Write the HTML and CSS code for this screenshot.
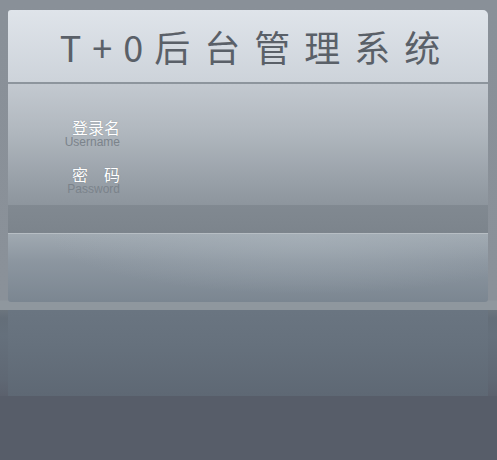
FILE: index.html
```html
<!DOCTYPE html>
<html lang="zh">
<head>
<meta charset="utf-8">
<title>T+0后台管理系统</title>
<link rel="stylesheet" href="styles.css">
</head>
<body>
<div class="stage">
  <div class="frame">
    <div class="panel">
      <div class="header"><h1 class="title"><span class="latin">T+0</span>后台管理系统</h1></div>
      <div class="body">
        <div class="form">
          <div class="field">
            <div class="label"><span class="cn">登录名</span><span class="en">Username</span></div>
          </div>
          <div class="field">
            <div class="label"><span class="cn">密　码</span><span class="en">Password</span></div>
          </div>
        </div>
        <div class="band"></div>
        <div class="lower"></div>
      </div>
    </div>
  </div>
  <div class="reflection"><div class="reflection-inner"></div></div>
</div>
</body>
</html>
```
FILE: styles.css
```css
html, body {
  margin: 0;
  padding: 0;
}
body {
  background: #575d69;
  font-family: "Noto Sans CJK SC", "Liberation Sans", sans-serif;
  width: 497px;
  height: 460px;
  overflow: hidden;
}
.stage {
  width: 497px;
}
.frame {
  background: linear-gradient(#899098 0, #8a9199 300px, #8f979e 301px, #8f979e 310px);
  padding: 10px 9px 8px 8px;
}
.panel {
  width: 480px;
  border-radius: 3px 5px 3px 3px;
  overflow: hidden;
  display: flex;
  flex-direction: column;
}
.header {
  height: 72px;
  background: linear-gradient(#dfe4ea, #cdd3da);
  border-bottom: 2px solid #8d959d;
  text-align: center;
}
.title {
  margin: 0;
  font-weight: 400;
  font-size: 36px;
  line-height: 72px;
  letter-spacing: 14px;
  text-indent: 18px;
  color: #5a6068;
}
.latin {
  letter-spacing: 11px;
}
.body {
  display: flex;
  flex-direction: column;
}
.form {
  height: 121px;
  box-sizing: border-box;
  padding-top: 35px;
  background: linear-gradient(#c3c9d0 0, #b0b7be 40%, #98a0a8 80%, #8d959d 100%);
  display: flex;
  flex-direction: column;
  gap: 17px;
}
.field {
  display: flex;
}
.label {
  width: 112px;
  display: flex;
  flex-direction: column;
  align-items: flex-end;
}
.cn {
  font-size: 16px;
  line-height: 17px;
  color: #ffffff;
  text-shadow: 0 0 1px rgba(90, 96, 104, 0.6);
}
.en {
  font-family: "Liberation Sans", Arial, sans-serif;
  font-size: 12px;
  line-height: 13px;
  color: #7b838b;
}
.band {
  height: 28px;
  background: linear-gradient(#818991, #7c848c);
  border-bottom: 1px solid #b7bec4;
}
.lower {
  height: 68px;
  background:
    radial-gradient(ellipse 260px 60px at 300px 0, rgba(170, 180, 188, 0.55), rgba(170, 180, 188, 0) 100%),
    linear-gradient(#a0a9b1 0, #8c96a0 40%, #7b8691 100%);
}
.reflection {
  height: 86px;
  background: linear-gradient(#6c757e 0, #646e79 8px, #65707c 30%, #5f6874 80%, #5b616d 100%);
  padding-left: 8px;
  padding-right: 9px;
}
.reflection-inner {
  height: 100%;
  background: linear-gradient(#6a7581 0, #66717d 40%, #5e6874 100%);
}
```
